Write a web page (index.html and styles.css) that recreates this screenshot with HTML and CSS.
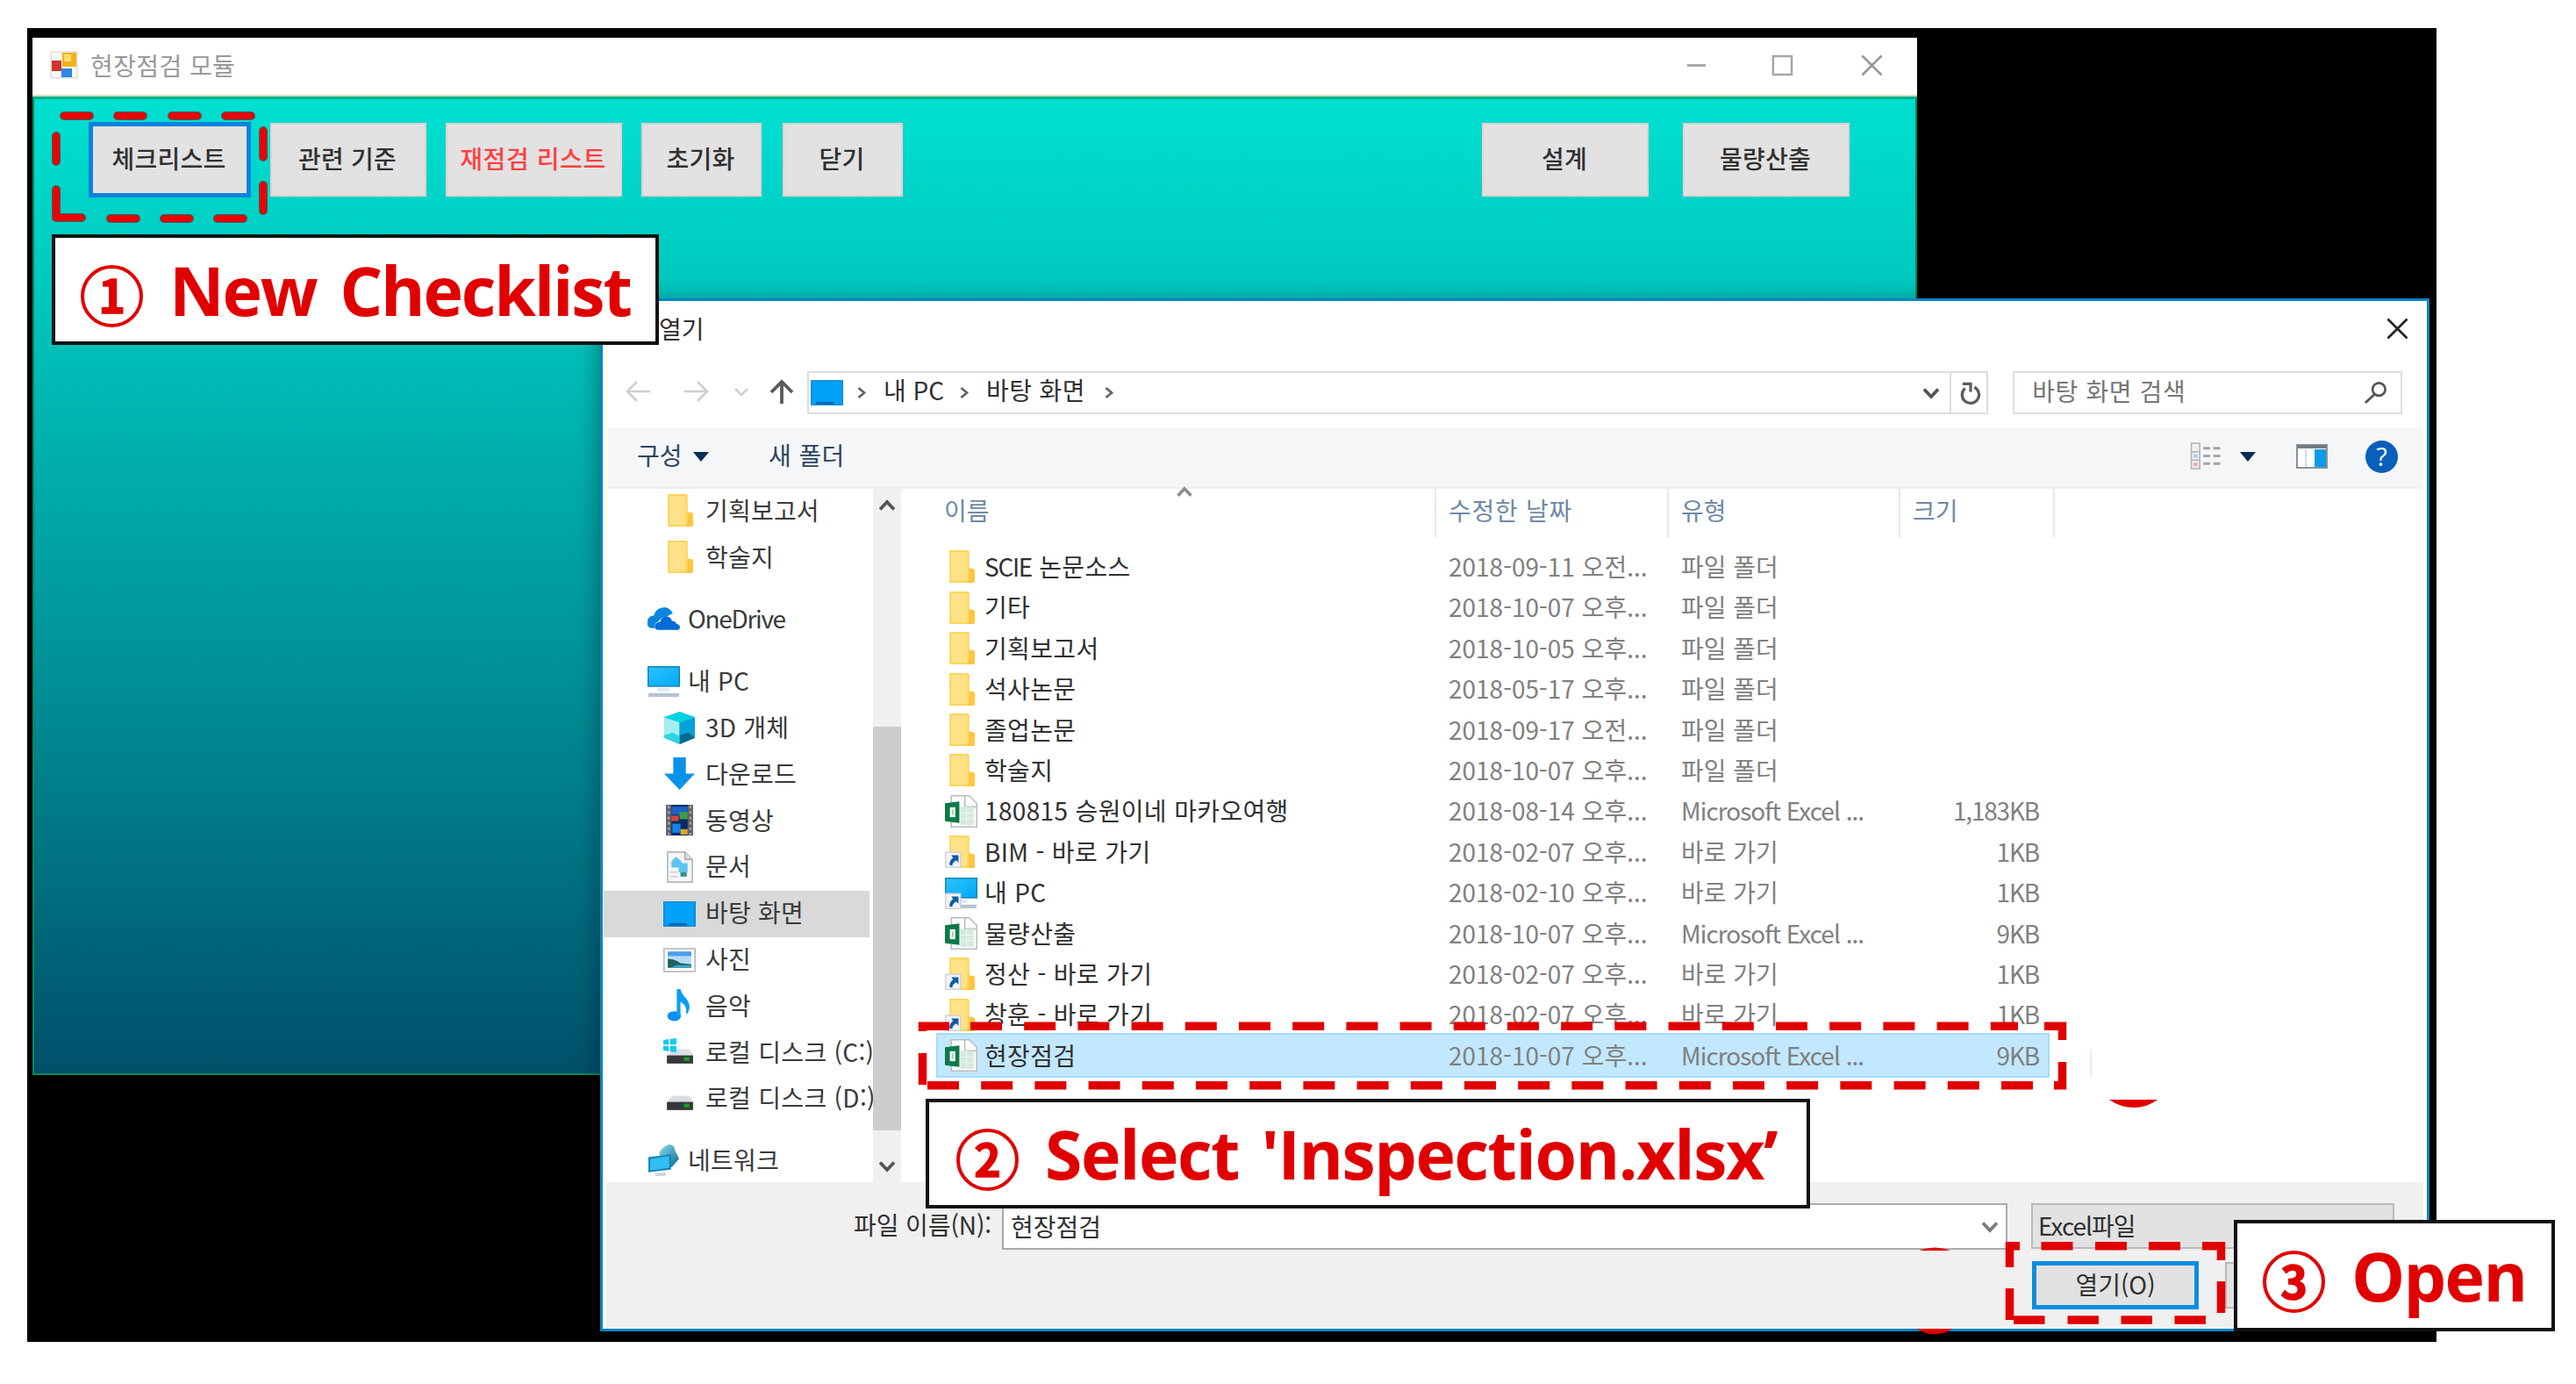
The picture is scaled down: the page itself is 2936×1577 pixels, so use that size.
FILE: index.html
```html
<!DOCTYPE html>
<html lang="ko">
<head>
<meta charset="utf-8">
<title>현장점검 모듈</title>
<link rel="stylesheet" href="styles.css">
</head>
<body>
<svg class="defs" width="0" height="0" aria-hidden="true">
  <defs>
    <linearGradient id="gFolder" x1="0" y1="0" x2="1" y2="0.3"><stop offset="0" stop-color="#ffe391"/><stop offset="1" stop-color="#ffe181"/></linearGradient>
    <linearGradient id="gScreen" x1="0" y1="0" x2="1" y2="1"><stop offset="0" stop-color="#2cc4f8"/><stop offset="1" stop-color="#00a8f8"/></linearGradient>
    <linearGradient id="gNet" x1="0" y1="0" x2="1" y2="1"><stop offset="0" stop-color="#8fdcea"/><stop offset="1" stop-color="#046c94"/></linearGradient>
    <symbol id="folder" viewBox="0 0 36 36"><path d="M5 0h20q2 0 2 2v18l6 1v13q0 2-2 2H5z" fill="#ffd45c"/><path d="M7 2h17q1 0 1 1v31H7z" fill="url(#gFolder)"/><path d="M27 20q4 0 6 2v12q0 2-2 2h-8q4-2 4-6z" fill="#fec63d"/></symbol>
    <symbol id="arrow" viewBox="0 0 36 36"><rect x="0.7" y="18.7" width="16.6" height="16.6" fill="#f2f4f6" stroke="#cfd2d6" stroke-width="1.4"/><path d="M7 22h8v8l-2.500-2.500q-4 2-4.500 6l-3-1q0-5 4-8z" fill="#0f5aa8"/></symbol>
    <symbol id="folderlink" viewBox="0 0 36 36"><use href="#folder" width="36" height="36"/><use href="#arrow" width="36" height="36"/></symbol>
    <symbol id="pc" viewBox="0 0 36 36"><rect x="0.700" y="1.700" width="34.600" height="21.600" fill="url(#gScreen)" stroke="#1583b4" stroke-width="1.400"/><path d="M11 25h14v4H11z" fill="#e3e8ee"/><path d="M1 31h34v4H1z" fill="#b4c2d2"/></symbol>
    <symbol id="pclink" viewBox="0 0 36 36"><use href="#pc" width="36" height="36"/><use href="#arrow" width="36" height="36"/></symbol>
    <symbol id="excel" viewBox="0 0 36 36"><path d="M7 .8h20l8.200 8.200v26.200H7z" fill="#fdfdfd" stroke="#b9bdbb" stroke-width="1.500"/><path d="M22 1v12h13" fill="none" stroke="#b9bdbb" stroke-width="1.500"/><path d="M17 13h15v20H17z" fill="#d5eadd"/><path d="M24 13v20M17 20h15M17 26h15" stroke="#eef8f2" stroke-width="1"/><path d="M0 9l16-2v24L0 29z" fill="#0c7a48"/><path d="M5.500 13.500h6v11h-6z" fill="#fff"/><path d="M7.500 16h2v6h-2z" fill="#9fd0b6"/></symbol>
    <symbol id="onedrive" viewBox="0 0 36 36"><path d="M4 28q-6-2-4-9 2-5 7-5 2-8 10-9 8-1 11 7-4 1-7 4-6-1-9 5-5 1-4 7z" fill="#0a86dd"/><path d="M13 30q-4 0-4-4t6-5q1-6 7-6 5 0 6 5 4 0 5 3 4 1 4 4t-4 3z" fill="#056bd8" transform="translate(-1 0)"/></symbol>
    <symbol id="cube" viewBox="0 0 36 36"><path d="M18 0l17 6v23l-17 7L1 29V6z" fill="#12c4d8"/><path d="M1 6l17 5v25L1 29z" fill="#a4eef2"/><path d="M18 11l17-5v23l-17 7z" fill="#0aa0d8"/><path d="M18 26l10-3 7 6-17 7z" fill="#066a8e"/><path d="M1 6l17-6 17 6-17 6z" fill="#08d2e0"/><path d="M1 26l9-3 8 4v9L1 29z" fill="#2dd6e0"/></symbol>
    <symbol id="down" viewBox="0 0 36 36"><path d="M11 0h14v18h10L18 36 1 18h10z" fill="#0a92ea"/></symbol>
    <symbol id="video" viewBox="0 0 36 36"><path d="M3 1h30v34H3z" fill="#5c6064"/><path d="M9 1h18v34H9z" fill="#0a2a66"/><path d="M9 3h18v9H9z" fill="#1a62c8"/><path d="M9 13h8v6H9z" fill="#d8423c"/><path d="M18 9h9v8h-9z" fill="#3f9c4a"/><path d="M10 22h9v10h-9z" fill="#1583ee"/><path d="M19 28h8v6h-8z" fill="#d8a92c"/><path d="M6 2v32M30 2v32" stroke="#a3a7aa" stroke-width="2.400" stroke-dasharray="3 3"/></symbol>
    <symbol id="doc" viewBox="0 0 36 36"><path d="M4.800 1.800H24l8.200 8.200v25.200H4.800z" fill="#f3f5f6" stroke="#b4b8ba" stroke-width="1.600"/><path d="M24 2v8h8" fill="#dde0e2" stroke="#a4a8aa" stroke-width="1.400"/><path d="M9 12l5-5 5 4 2 3h6v10H17v-5H9z" fill="#5cc5ee"/><path d="M19 24h7v5h-7z" fill="#3b8b96"/><path d="M8 24h8M8 29h8" stroke="#cbd0d3" stroke-width="1.500"/></symbol>
    <symbol id="desk" viewBox="0 0 36 36"><rect x="0.700" y="5.700" width="34.600" height="26.600" fill="#00a2fa" stroke="#0b86cf" stroke-width="1.400"/><path d="M6 29h20v3H6z" fill="#0568b4"/></symbol>
    <symbol id="photo" viewBox="0 0 36 36"><rect x="0.800" y="5.800" width="34.400" height="25.400" fill="#fbfbfb" stroke="#b9bcbe" stroke-width="1.600"/><path d="M5 9h26v18H5z" fill="#b4dcf8"/><path d="M5 9h26v5H5z" fill="#4b9ff0"/><path d="M5 17q8 0 14 5l12 1v4H5z" fill="#1e6258"/><path d="M14 24h17v3H8z" fill="#3fa3c8"/></symbol>
    <symbol id="music" viewBox="0 0 36 36"><ellipse cx="12" cy="30" rx="7.500" ry="5.500" fill="#0a92f2"/><path d="M15 0h4q1 5 6 10 7 8 2 17h-2q2-9-6-13v16h-4z" fill="#0a9df6"/></symbol>
    <symbol id="disk" viewBox="0 0 36 36"><path d="M10 15h19l5 8H4z" fill="#dadde1"/><path d="M4 22h29v9H4z" fill="#35383a"/><path d="M23 24h6v4h-6z" fill="#13a02c"/></symbol>
    <symbol id="diskc" viewBox="0 0 36 36"><use href="#disk" width="36" height="36"/><path d="M0 5l6-1v6H0zM7.500 4l7-1v7h-7zM0 11.500h6v6l-6-1zM7.500 11.500h7v7l-7-1z" fill="#12c8f4"/></symbol>
    <symbol id="net" viewBox="0 0 36 36"><path d="M13 9q5-8 12-9l4 2q2 7 6 14l-8 9H15z" fill="url(#gNet)"/><path d="M1 14l25-3v17L1 31z" fill="#0b86b6"/><path d="M3 16l21-3v13L3 29z" fill="#33bdf0"/><path d="M8 32l12-1v4H9z" fill="#cdd5dc"/></symbol>
    <symbol id="chev" viewBox="0 0 12 14"><path d="M2.500 1.500L9 7l-6.500 5.500" fill="none" stroke="#666" stroke-width="2.800"/></symbol>
    <symbol id="vee" viewBox="0 0 20 14"><path d="M2 2.500l8 8.500 8-8.500" fill="none" stroke="currentColor" stroke-width="3.800"/></symbol>
    <symbol id="cross" viewBox="0 0 26 26"><path d="M1.500 1.500l23 23M24.500 1.500l-23 23" fill="none" stroke="currentColor" stroke-width="2.800"/></symbol>
  </defs>
</svg>

<main class="desktop">
  <section class="app">
    <header class="app-title">
      <svg class="app-icon" viewBox="0 0 32 32"><path d="M1 1h30v30H1z" fill="#f6f6f6" stroke="#cdd0d3"/><path d="M2 11h11v12H2z" fill="#cf3428"/><path d="M14 2h16v16H14z" fill="#efb41c"/><path d="M16 4h8v8h-8z" fill="#fbdc6a"/><path d="M13 20h12v10H13z" fill="#2f86e0"/></svg>
      <span class="app-name">현장점검 모듈</span>
      <svg class="wc min" viewBox="0 0 26 26"><path d="M2 13h22" stroke="currentColor" stroke-width="3"/></svg>
      <svg class="wc max" viewBox="0 0 26 26"><path d="M2 2h22v22H2z" fill="none" stroke="currentColor" stroke-width="2.600"/></svg>
      <svg class="wc"><use href="#cross"/></svg>
    </header>
    <div class="app-bar">
      <button class="btn b1">체크리스트</button>
      <button class="btn b2">관련 기준</button>
      <button class="btn b3">재점검 리스트</button>
      <button class="btn b4">초기화</button>
      <button class="btn b5">닫기</button>
      <span class="grow"></span>
      <button class="btn b6">설계</button>
      <button class="btn b6">물량산출</button>
    </div>
  </section>

  <section class="dialog">
    <header class="dlg-title"><span>열기</span><svg class="dlg-close"><use href="#cross"/></svg></header>
    <nav class="nav">
      <svg class="hist" viewBox="0 0 200 40">
        <path d="M28 20H2M13 9L2 20l11 11M67 20h26M82 9l11 11-11 11M125 17l7 7 7-7" fill="none" stroke="#cfcfcf" stroke-width="2.600"/>
        <path d="M178 34V10M166 21l12-12 12 12" fill="none" stroke="#5a5a5a" stroke-width="3.800"/>
      </svg>
      <div class="address">
        <svg class="addr-icon"><use href="#desk"/></svg>
        <svg class="chev c1"><use href="#chev"/></svg><span class="pc">내 PC</span>
        <svg class="chev c2"><use href="#chev"/></svg><span class="here">바탕 화면</span>
        <svg class="chev c3"><use href="#chev"/></svg>
        <svg class="drop"><use href="#vee"/></svg>
        <span class="refresh"><svg viewBox="0 0 26 28"><path d="M18 6.500a10 10 0 1 1-11 1.200" fill="none" stroke="#5c5c5c" stroke-width="3.400"/><path d="M4 2.500h9.500V12" fill="none" stroke="#5c5c5c" stroke-width="3.400"/></svg></span>
      </div>
      <div class="search"><span>바탕 화면 검색</span><svg viewBox="0 0 28 28"><circle cx="18" cy="10" r="7.500" fill="none" stroke="#555" stroke-width="2.800"/><path d="M13 15.500L2 26" stroke="#555" stroke-width="3"/></svg></div>
    </nav>
    <div class="tools">
      <span class="org">구성</span><i class="tri"></i><span class="newf">새 폴더</span><span class="grow"></span>
      <svg class="t-view" viewBox="0 0 36 32"><path d="M1 1h10v30H1z" fill="#eef0f1" stroke="#b0b3b5" stroke-width="1.600"/><path d="M1 11h10M1 21h10" stroke="#b0b3b5" stroke-width="1.600"/><path d="M3.500 14h5v4h-5z" fill="#a9d2f0"/><path d="M3.500 24h5v4h-5z" fill="#f2a9a4"/><path d="M15 7h8M27 7h8M15 16h8M27 16h8M15 25h8M27 25h8" stroke="#a2a5a8" stroke-width="3"/></svg>
      <i class="tri t2"></i>
      <svg class="t-pane" viewBox="0 0 36 28"><path d="M1 1h34v26H1z" fill="#fff" stroke="#8c9298" stroke-width="2"/><path d="M1 1h34v4H1z" fill="#747c84"/><path d="M11 6v20" stroke="#c8ccd0" stroke-width="1.500"/><path d="M21 6h13v20H21z" fill="#0a9be8"/></svg>
      <span class="help">?</span>
    </div>
    <div class="body">
      <aside class="tree">
        <div class="node sub"><svg><use href="#folder"/></svg>기획보고서</div>
        <div class="node sub"><svg><use href="#folder"/></svg>학술지</div>
        <div class="node top od"><svg><use href="#onedrive"/></svg>OneDrive</div>
        <div class="node top"><svg><use href="#pc"/></svg>내 PC</div>
        <div class="node sub"><svg><use href="#cube"/></svg>3D 개체</div>
        <div class="node sub"><svg><use href="#down"/></svg>다운로드</div>
        <div class="node sub"><svg><use href="#video"/></svg>동영상</div>
        <div class="node sub"><svg><use href="#doc"/></svg>문서</div>
        <div class="node sub on"><svg><use href="#desk"/></svg>바탕 화면</div>
        <div class="node sub"><svg><use href="#photo"/></svg>사진</div>
        <div class="node sub"><svg><use href="#music"/></svg>음악</div>
        <div class="node sub drive"><svg><use href="#diskc"/></svg>로컬 디스크 (C:)</div>
        <div class="node sub drive"><svg><use href="#disk"/></svg>로컬 디스크 (D:)</div>
        <div class="node top"><svg><use href="#net"/></svg>네트워크</div>
      </aside>
      <div class="scroll"><svg class="up"><use href="#vee"/></svg><i class="thumb"></i><svg><use href="#vee"/></svg></div>
      <div class="files">
        <div class="head">
          <span class="h1">이름<svg><use href="#vee"/></svg></span><span class="h2">수정한 날짜</span><span class="h3">유형</span><span class="h4">크기</span>
        </div>
        <div class="list">
          <div class="row"><svg><use href="#folder"/></svg><b><em class="scie">SCIE</em> 논문소스</b><span>2018-09-11 오전...</span><span>파일 폴더</span><span></span></div>
          <div class="row"><svg><use href="#folder"/></svg><b>기타</b><span>2018-10-07 오후...</span><span>파일 폴더</span><span></span></div>
          <div class="row"><svg><use href="#folder"/></svg><b>기획보고서</b><span>2018-10-05 오후...</span><span>파일 폴더</span><span></span></div>
          <div class="row"><svg><use href="#folder"/></svg><b>석사논문</b><span>2018-05-17 오후...</span><span>파일 폴더</span><span></span></div>
          <div class="row"><svg><use href="#folder"/></svg><b>졸업논문</b><span>2018-09-17 오전...</span><span>파일 폴더</span><span></span></div>
          <div class="row"><svg><use href="#folder"/></svg><b>학술지</b><span>2018-10-07 오후...</span><span>파일 폴더</span><span></span></div>
          <div class="row"><svg><use href="#excel"/></svg><b>180815 승원이네 마카오여행</b><span>2018-08-14 오후...</span><span class="ms">Microsoft Excel ...</span><span>1,183KB</span></div>
          <div class="row"><svg><use href="#folderlink"/></svg><b>BIM - 바로 가기</b><span>2018-02-07 오후...</span><span>바로 가기</span><span>1KB</span></div>
          <div class="row"><svg><use href="#pclink"/></svg><b>내 PC</b><span>2018-02-10 오후...</span><span>바로 가기</span><span>1KB</span></div>
          <div class="row"><svg><use href="#excel"/></svg><b>물량산출</b><span>2018-10-07 오후...</span><span class="ms">Microsoft Excel ...</span><span>9KB</span></div>
          <div class="row"><svg><use href="#folderlink"/></svg><b>정산 - 바로 가기</b><span>2018-02-07 오후...</span><span>바로 가기</span><span>1KB</span></div>
          <div class="row"><svg><use href="#folderlink"/></svg><b>창훈 - 바로 가기</b><span>2018-02-07 오후...</span><span>바로 가기</span><span>1KB</span></div>
          <div class="row picked"><svg><use href="#excel"/></svg><b>현장점검</b><span>2018-10-07 오후...</span><span class="ms">Microsoft Excel ...</span><span>9KB</span></div>
        </div>
      </div>
    </div>
    <footer class="foot">
      <div class="line">
        <label>파일 이름(N):</label>
        <div class="input"><span>현장점검</span><svg><use href="#vee"/></svg></div>
        <div class="combo">Excel파일</div>
      </div>
      <div class="line acts"><button class="ok">열기(O)</button><button class="cancel"></button></div>
    </footer>
  </section>
</main>

<svg class="marks" viewBox="0 0 2936 1577">
  <path d="M73 132h29M134 132h29M196 132h29M257 132h29M64 155v29M64 216v32h29M300 149v30M300 211v29M126 249h29M187 249h29M248 249h29" fill="none" stroke="#5a1418" stroke-width="10" stroke-linecap="round" stroke-linejoin="round" opacity="0.6"/>
  <path d="M73 132h29M134 132h29M196 132h29M257 132h29M64 155v29M64 216v32h29M300 149v30M300 211v29M126 249h29M187 249h29M248 249h29" fill="none" stroke="#f00000" stroke-width="7.500" stroke-linecap="round" stroke-linejoin="round"/>
  <g fill="none" stroke="#e10000" stroke-width="9.500">
    <path d="M1106 1169.300H2300" stroke-dasharray="36 25.200"/>
    <path d="M1057 1236.700H2336" stroke-dasharray="36 25.200"/>
    <path d="M1051.500 1175v-5.700H1082M2330 1169.300h20.500V1185M1051.500 1200v36M2350.500 1210v26.700H2341"/>
    <path d="M2290.500 1444v-24.300H2302M2326.500 1419.700h36M2388 1419.700h36M2449 1419.700h36M2510 1419.700h21.500V1436M2290.500 1468v36M2531.500 1460v36M2295 1504h35.500M2356.500 1504h35.500M2417.500 1504h35.500M2478.500 1504h35.500"/>
  </g>
  <g fill="#e10000"><path d="M2404 1253h55q-12 9-27 9t-28-9z"/><path d="M2187 1425q18-7 36 0z"/><path d="M2185 1514h40q-8 6-20 6t-20-6z"/></g>
  <path d="M2383 1196v32" stroke="#fbe3e3" stroke-width="2"/>
</svg>

<div class="note n1"><span class="num">1</span><span class="say">New Checklist</span></div>
<div class="note n2"><span class="num">2</span><span class="say">Select 'Inspection.xlsx’</span></div>
<div class="note n3"><span class="num">3</span><span class="say">Open</span></div>
</body>
</html>
```
FILE: styles.css
```css
* { box-sizing: border-box; }
body {
  margin: 0;
  width: 2936px;
  height: 1577px;
  overflow: hidden;
  position: relative;
  background: #fff;
  font: 28px/1 "Noto Sans CJK KR", "Noto Sans", sans-serif;
  color: #303030;
}
.defs { position: absolute; }
svg { display: block; flex: none; }
button { font: inherit; color: inherit; padding: 0; margin: 0; border-radius: 0; white-space: nowrap; }
.grow { flex: 1; }

.desktop { position: absolute; left: 31px; top: 32px; width: 2746px; height: 1497px; background: #000; overflow: hidden; }

/* main application window */
.app {
  position: absolute; left: 6px; top: 11px; width: 2148px; height: 1182px;
  display: flex; flex-direction: column;
}
.app-title { height: 67px; background: #fff; display: flex; align-items: center; padding: 0 39px 3px 20px; color: #999; border-bottom: 2px solid #d8dcc0; }
.app-icon { width: 32px; height: 32px; }
.app-name { flex: 1; margin-left: 14px; letter-spacing: .4px; }
.wc { width: 25px; height: 25px; color: #999; margin-left: 77px; }
.wc.min, .wc.max { color: #a6a6a6; }
.wc.max { margin-left: 73px; }
.app-bar {
  flex: 1; display: flex; align-items: flex-start; padding: 27px 75px 0 62px;
  background: linear-gradient(#00e0d1, #00cbc1 17%, #00b4b0 33%, #008f96 60%, #00506a);
  border: 2px solid #078a58; border-top: 3px solid #00b08a;
}
.btn { height: 84px; background: #e2e2e2; border: 2px solid #e9cfcf; color: #303030; font-weight: 500; padding: 0 2px 4px 0; letter-spacing: .2px; }
.b1 { width: 185px; height: 86px; margin-top: -1px; border: 5px solid #0b83dc; }
.b2 { width: 178px; margin-left: 22px; }
.b3 { width: 201px; margin-left: 22px; color: #ff4040; letter-spacing: .6px; }
.b4 { width: 137px; margin-left: 22px; }
.b5 { width: 137px; margin-left: 24px; }
.b6 { width: 190px; margin-left: 39px; }

/* file dialog */
.dialog {
  position: absolute; left: 653px; top: 308px; width: 2085px; height: 1177px;
  display: flex; flex-direction: column; background: #fff; padding-left: 1px;
  border: 3px solid #0a84c6; box-shadow: 0 5px 26px rgba(0,0,0,.4);
}
.dlg-title { height: 65px; display: flex; justify-content: space-between; padding: 17px 21px 0 64px; }
.dlg-title span { margin-left: -1px; }
.dlg-close { width: 25px; height: 25px; margin-top: 2px; color: #222; }
.nav { height: 79px; display: flex; padding: 15px 28px 0 26px; align-items: flex-start; }
.hist { width: 200px; height: 40px; margin: 3px 7px 0 -1px; }
.address { width: 1347px; height: 49px; border: 2px solid #dedede; display: flex; align-items: center; padding-left: 2px; }
.addr-icon { width: 37px; height: 37px; margin-top: -3px; }
.chev { width: 12px; height: 15px; }
.c1 { margin: 0 19px 0 15px; }
.pc { width: 69px; margin-top: -8px; white-space: nowrap; }
.c2 { margin: 0 19px 0 17px; }
.here { width: 116px; margin-top: -8px; white-space: nowrap; letter-spacing: .4px; }
.c3 { margin-left: 18px; }
.drop { width: 20px; height: 14px; color: #555; margin-left: auto; margin-right: 11px; }
.refresh { height: 100%; width: 42px; border-left: 2px solid #dedede; padding: 10px 0 0 9px; }
.refresh svg { width: 25px; height: 27px; }
.search { width: 444px; height: 49px; margin-left: 28px; border: 2px solid #dedede; display: flex; align-items: center; justify-content: space-between; padding: 0 15px 0 20px; color: #767676; }
.search span { margin-top: -5px; letter-spacing: .6px; }
.search svg { width: 27px; height: 27px; }

.tools { height: 70px; background: #f4f6f8; border-bottom: 2px solid #eceeef; margin: 0 5px; display: flex; align-items: center; padding: 0 28px 2px 33px; color: #2c4460; }
.tri { border: 9px solid transparent; border-top: 11px solid #0b2c57; border-bottom: 0; }
.org { width: 53px; margin-right: 11px; margin-top: -4px; }
.newf { margin-left: 68px; margin-top: -4px; letter-spacing: .4px; }
.t-view { width: 36px; height: 31px; margin-top: -2px; }
.t2 { margin: 0 46px 0 21px; }
.t-pane { width: 36px; height: 28px; }
.help { width: 37px; height: 37px; margin-left: 43px; border-radius: 50%; background: #0a5fbc; color: #fff; font: 500 29px/36px "Open Sans", sans-serif; text-align: center; }

.body { height: 790px; display: flex; }
.tree { width: 307px; overflow: hidden; color: #3a3a3a; }
.node { height: 52.800px; display: flex; align-items: center; white-space: nowrap; width: 303px; gap: 11px; padding-bottom: 5px; letter-spacing: .2px; }
.node svg { width: 37px; height: 37px; position: relative; top: 1px; }
.sub { padding-left: 68px; }
.top { padding-left: 50px; margin-top: 18px; gap: 9px; }
.od { letter-spacing: -1.300px; }
.drive { width: 307px; letter-spacing: .3px; }
.on { background: #d9d9d9; }
.scroll { width: 32px; background: #f0f0f0; display: flex; flex-direction: column; align-items: center; padding: 12px 0 11px; justify-content: space-between; color: #555; }
.scroll svg { width: 20px; height: 14px; }
.scroll .up { transform: scaleY(-1); }
.thumb { width: 32px; height: 460px; background: #cdcdcd; margin-top: 210px; }

.files { flex: 1; }
.head { display: flex; height: 55px; color: #6f8aa6; }
.head span { border-right: 2px solid #e8e8e8; padding: 10px 0 0 14px; white-space: nowrap; }
.head .h1 { width: 610px; padding-left: 49px; display: flex; }
.h1 svg { width: 20px; height: 13px; margin: -13px 0 0 212px; color: #8c8c8c; transform: scaleY(-1); }
.head .h2 { width: 265px; letter-spacing: .7px; }
.head .h3 { width: 264px; }
.head .h4 { width: 176px; }
.list { margin: 10.800px 0 0 42px; width: 1265px; }
.row { height: 46.400px; display: grid; grid-template-columns: 46px 528px 265px 1fr 120px; align-items: center; padding: 0 10px 2px 8px; white-space: nowrap; color: #808080; }
.row svg { width: 37px; height: 37px; position: relative; top: 1px; }
.row b { font-weight: 400; color: #303030; letter-spacing: .35px; margin-left: -1px; }
.row em { font-style: normal; }
.scie { letter-spacing: -1.300px; }
.row > span:last-child { text-align: right; letter-spacing: -1.200px; }
.row .ms { letter-spacing: -1px; }
.picked { background: #c2e8ff; outline: 2px solid #a5dcfc; }

.foot { flex: 1; margin: 0 4px 0 3px; background: #f0f0f0; padding-top: 24px; }
.line { display: flex; }
.foot label { width: 169px; margin: 10px 0 0 282px; white-space: nowrap; letter-spacing: -.1px; }
.input { width: 1146px; height: 53px; background: #fff; border: 2px solid #a9a9a9; display: flex; justify-content: space-between; align-items: center; padding: 0 8px 2px 8px; }
.input svg { width: 20px; height: 14px; color: #7a7a7a; margin-top: 3px; }
.combo { width: 414px; height: 52px; margin-left: 27px; background: #e2e2e2; border: 2px solid #b9b9b9; padding: 9px 0 0 6px; letter-spacing: -1px; }
.acts { margin: 13px 0 0 1625px; }
.ok { width: 190px; height: 55px; background: #e2e2e2; border: 5px solid #0b8de0; padding-bottom: 3px; }
.cancel { width: 190px; height: 53px; margin: 1px 0 0 30px; background: #e2e2e2; border: 2px solid #b9b9b9; }

/* step annotations */
.marks { position: absolute; left: 0; top: 0; width: 2936px; height: 1577px; }
.note { position: absolute; display: flex; align-items: center; background: #fff; border: 4px solid #111; color: #e10000; }
.num { flex: none; width: 71px; height: 71px; border: 4px solid; border-radius: 50%; font-weight: 700; font-size: 52px; line-height: 58px; text-align: center; margin-top: 14px; -webkit-text-stroke: 1.500px #e10000; }
.say { font: 700 77px/1 "Open Sans", "Noto Sans", sans-serif; letter-spacing: -2.200px; white-space: nowrap; margin-left: 30px; }
.n1 { left: 59px; top: 267px; width: 692px; height: 126px; padding-left: 29px; }
.n1 .say { word-spacing: 9px; }
.n2 { left: 1055px; top: 1252px; width: 1008px; height: 125px; padding-left: 31px; }
.n2 .say { letter-spacing: -1.500px; word-spacing: 7px; }
.n3 { left: 2546px; top: 1390px; width: 366px; height: 127px; padding-left: 29px; }
.n3 .say { letter-spacing: -1.700px; }
```
